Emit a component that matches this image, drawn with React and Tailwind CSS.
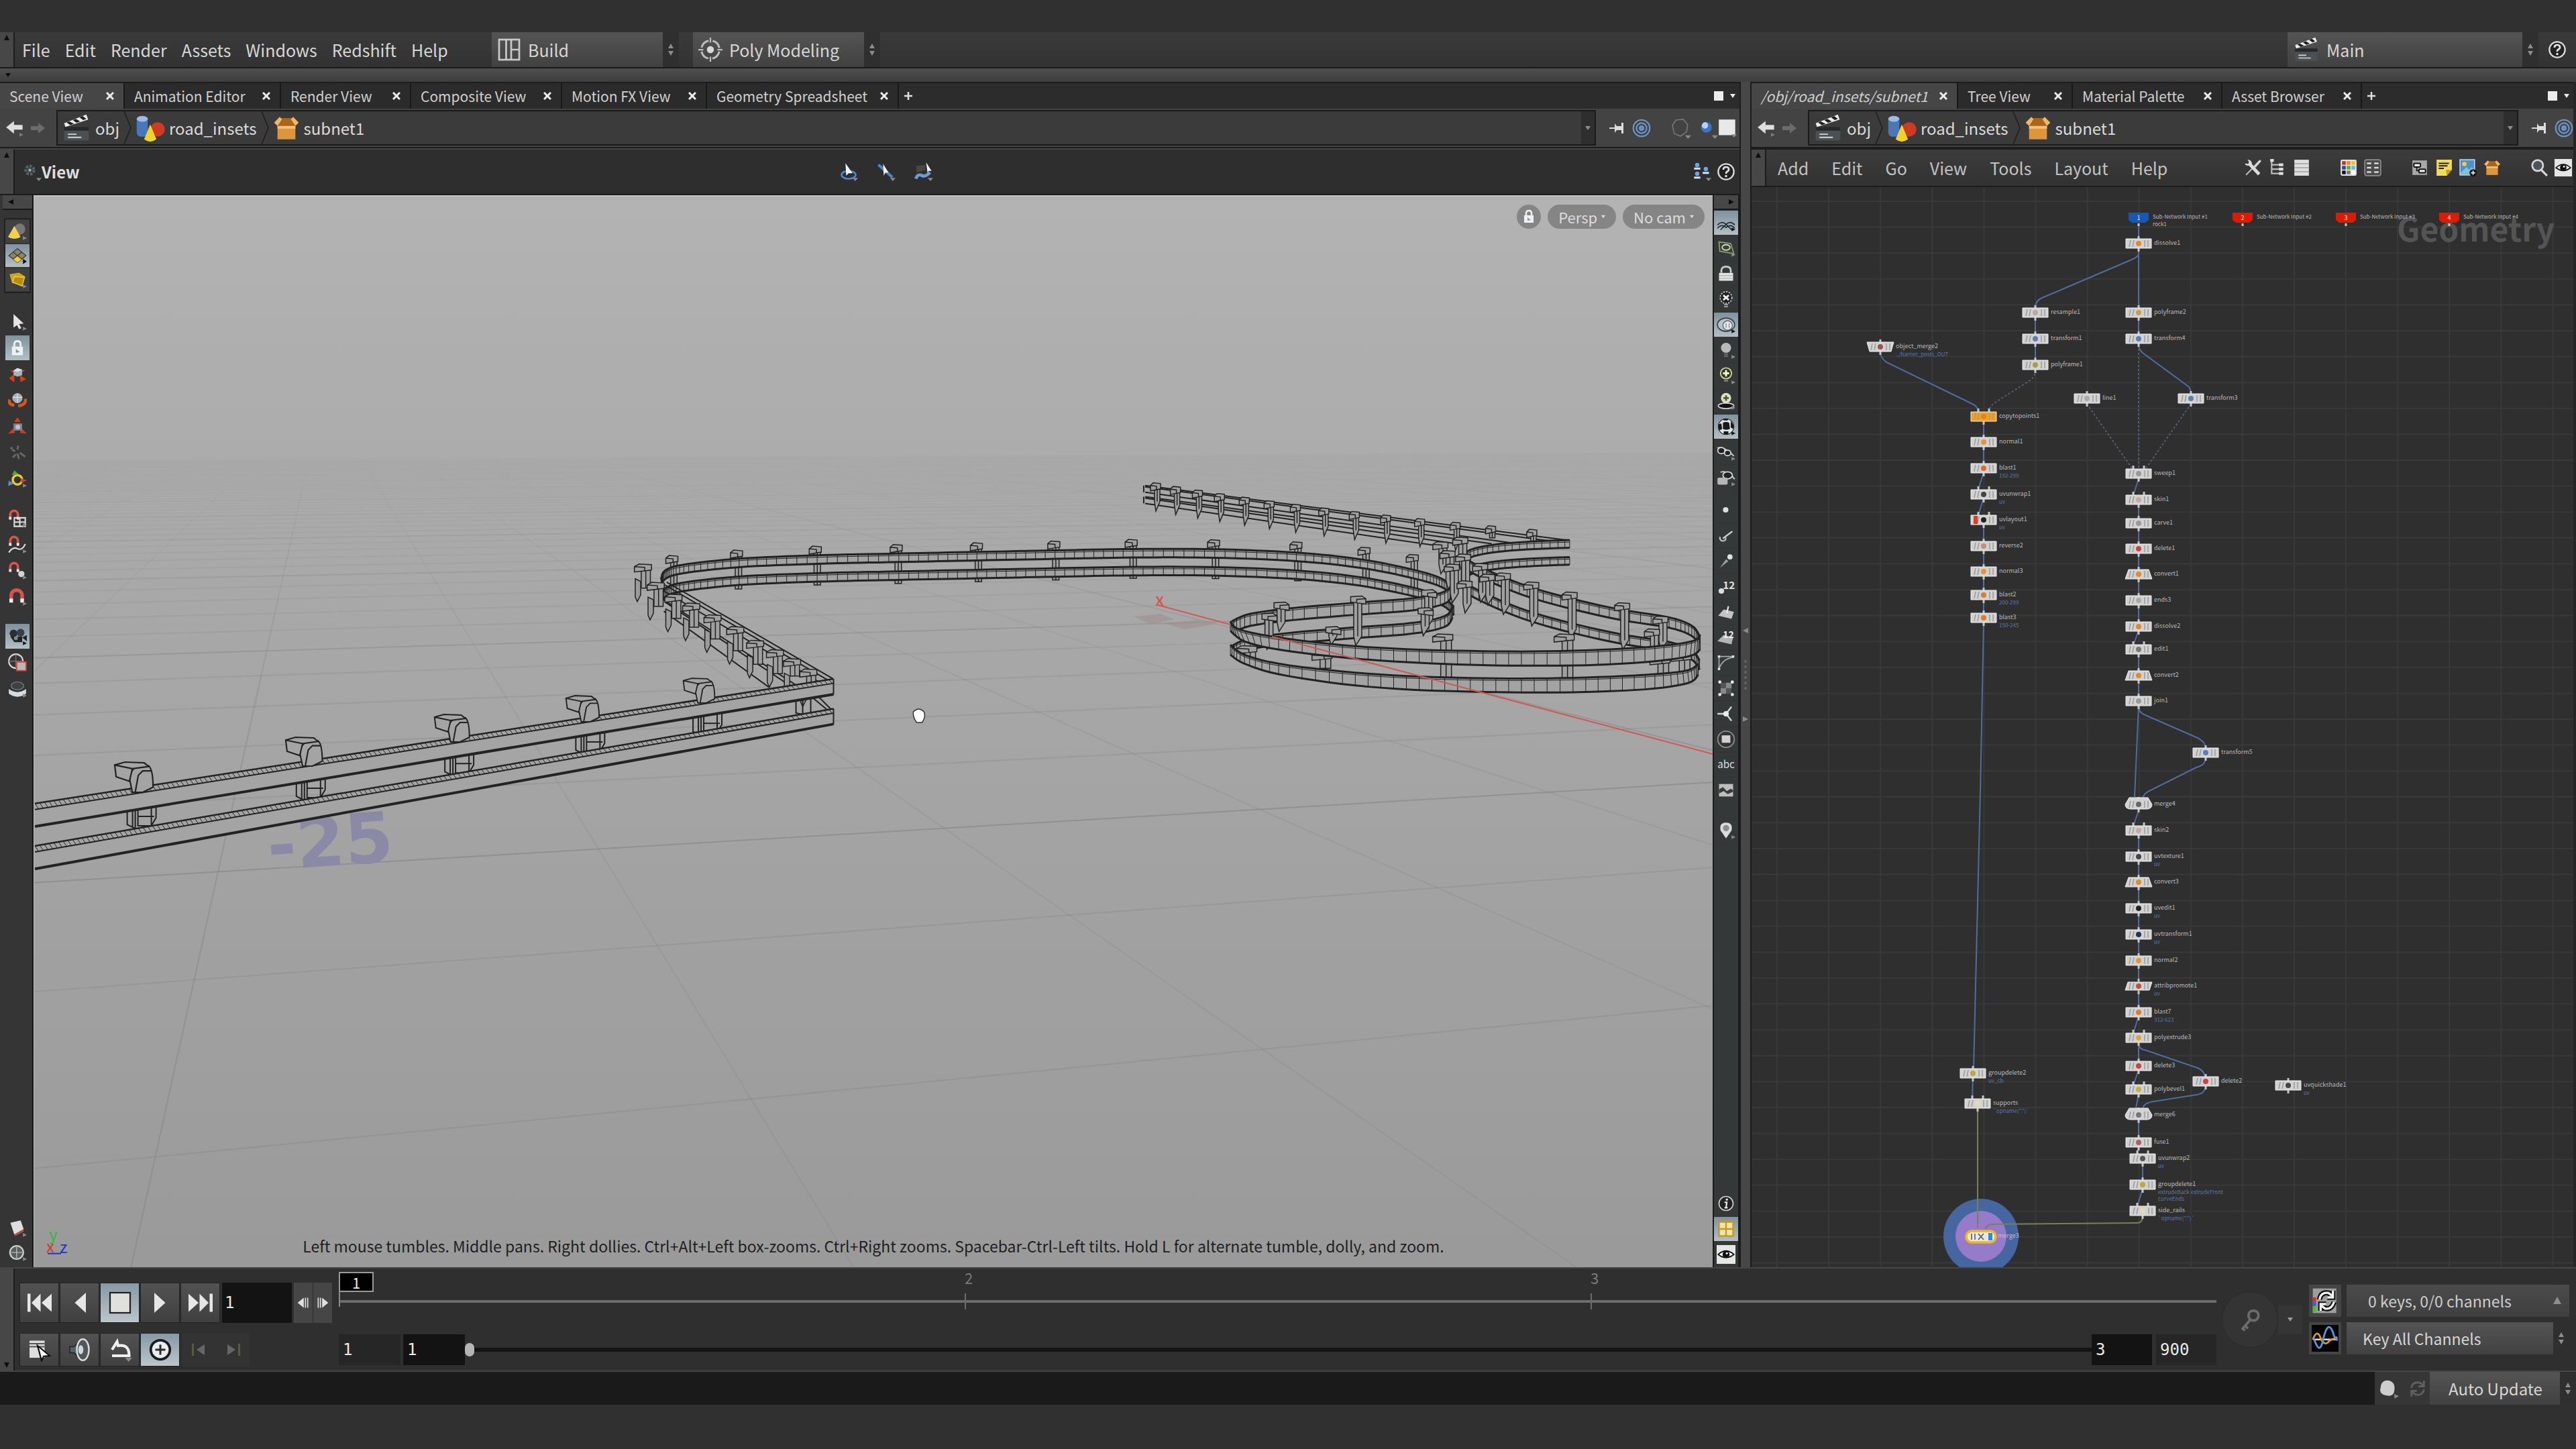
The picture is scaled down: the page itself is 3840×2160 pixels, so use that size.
const LEFT_TABS = [
  { label: 'Scene View', w: 'w-[186px]', active: true },
  { label: 'Animation Editor', w: 'w-[233px]' },
  { label: 'Render View', w: 'w-[194px]' },
  { label: 'Composite View', w: 'w-[225px]' },
  { label: 'Motion FX View', w: 'w-[216px]' },
  { label: 'Geometry Spreadsheet', w: 'w-[286px]' },
]

const RIGHT_TABS = [
  { label: '/obj/road_insets/subnet1', w: 'w-[308px]', active: true, italic: true },
  { label: 'Tree View', w: 'w-[171px]' },
  { label: 'Material Palette', w: 'w-[223px]' },
  { label: 'Asset Browser', w: 'w-[208px]' },
]

/* ---------- icons ---------- */

const flyout = <path d="M19 18 L24 20.5 L19 23 Z" fill="#8a8a8a" />
const drop = <path d="M17 20 H24 L20.5 24 Z" fill="#8a8a8a" />
const magnet = (
  <>
    <path d="M4 16 V10 A7 7 0 0 1 18 10 V16" fill="none" stroke="#d9534c" strokeWidth="4.5" />
    <path d="M1.7 14 H6.3 V19 H1.7 Z M15.7 14 H20.3 V19 H15.7 Z" fill="#f2f2f2" />
  </>
)
const eyeShape = (
  <>
    <path d="M2 12 Q12 3 22 12 Q12 20 2 12 Z" fill="#fff" stroke="#111" strokeWidth="1.5" />
    <circle cx="12" cy="12" r="4.5" fill="#111" />
    <circle cx="13" cy="10.5" r="1.3" fill="#fff" />
  </>
)
const boxShape = (
  <>
    <path d="M4 10 H20 V22 H4 Z" fill="#dd963b" />
    <path d="M4 10 L7 3 H17 L20 10 Z" fill="#a8651b" />
    <path d="M4 10 L1 7 L6 2 L8 4 Z M20 10 L23 7 L18 2 L16 4 Z" fill="#f0b765" />
    <path d="M4 10 H20 V12.5 H4 Z" fill="#f5c179" />
  </>
)

const ICONS = {
  layout: (
    <g fill="none" stroke="#c9c9c9" strokeWidth="1.8">
      <rect x="2" y="2" width="20" height="20" />
      <path d="M9 2 V22 M14 2 V22 M14 12 H22" />
    </g>
  ),
  target: (
    <g fill="none" stroke="#bdbdbd" strokeWidth="2">
      <circle cx="12" cy="12" r="9" strokeDasharray="10 4.14" strokeDashoffset="-2" />
      <path d="M12 0 V5 M12 19 V24 M0 12 H5 M19 12 H24" strokeWidth="1.5" />
      <circle cx="12" cy="12" r="3.5" fill="#d8d8d8" stroke="none" />
    </g>
  ),
  clapper: (
    <>
      <path d="M2 11 H22 V22 H2 Z" fill="#4b5052" />
      <path d="M2 11 H22 V14 H2 Z" fill="#26282a" />
      <path d="M2 8 L20 1 L21.5 5 L3 11 Z" fill="#ececec" />
      <path d="M6 6.5 L10 8.5 L7 9.6 L4 7.5 Z M11.5 4.5 L15 6.5 L12 7.7 L9 5.5 Z M17 2.2 L20 4.5 L17.5 5.5 L14.5 3.3 Z" fill="#1d1d1d" />
      <path d="M5 17 H12 M5 19.5 H16" stroke="#cfd5d8" strokeWidth="1" />
    </>
  ),
  geo: (
    <>
      <rect x="1" y="2" width="9" height="17" rx="3.5" fill="#4877ba" />
      <ellipse cx="5.5" cy="4.5" rx="4.5" ry="2.3" fill="#9dbbe6" />
      <circle cx="18" cy="13" r="5.8" fill="#cf3a24" />
      <path d="M12 9 L17 21 Q12 25 7 21 Z" fill="#f2d22c" />
    </>
  ),
  box: boxShape,
  back: (
    <>
      <path d="M1 11 L11 3 V8 H22 V14 H11 V19 Z" fill="#dedede" />
      <path d="M18 18 L23 20.5 L18 23 Z" fill="#7d7d7d" />
    </>
  ),
  forward: <path d="M23 12 L13 4 V9 H2 V15 H13 V20 Z" fill="#6b6b6b" />,
  pin: (
    <>
      <path d="M0 12 H9" stroke="#d9d9d9" strokeWidth="2" />
      <path d="M8 5 L11 9 H18 V4 H21 V20 H18 V15 H11 L8 19 Z" fill="#dcdcdc" />
    </>
  ),
  rings: (
    <g fill="none" stroke="#6f97cf" strokeWidth="1.8">
      <circle cx="12" cy="12" r="10.5" />
      <circle cx="12" cy="12" r="6.5" />
      <circle cx="12" cy="12" r="2.5" fill="#4c86d8" />
    </g>
  ),
  ghost: (
    <>
      <path d="M7 3 L15 2 L20 8 L19 16 L12 21 L5 18 L3 9 Z" fill="none" stroke="#777" strokeWidth="1.2" />
      {drop}
    </>
  ),
  ball: (
    <>
      <circle cx="11" cy="11" r="6" fill="#3c74c4" />
      <circle cx="9.5" cy="9" r="3.5" fill="#b9d2f5" />
      {drop}
    </>
  ),
  square: (
    <>
      <rect x="1" y="1" width="21" height="20" fill="#e8e8e8" />
      {drop}
    </>
  ),
  help: (
    <>
      <circle cx="12" cy="12" r="10" fill="#222" stroke="#d8d8d8" strokeWidth="2" />
      <path d="M8.5 9.5 Q8.5 6 12 6 Q15.5 6 15.5 9 Q15.5 11 12.8 12.2 Q12 12.7 12 14.5" fill="none" stroke="#e4e4e4" strokeWidth="2.3" />
      <circle cx="12" cy="17.5" r="1.5" fill="#e4e4e4" />
    </>
  ),
  gear: (
    <>
      <circle cx="9" cy="10" r="5" fill="none" stroke="#54636b" strokeWidth="4" strokeDasharray="3 1.5" />
      <circle cx="9" cy="10" r="2" fill="#9aa8b0" />
      {drop}
    </>
  ),
  tumble: (
    <>
      <ellipse cx="12" cy="16" rx="9" ry="5" fill="none" stroke="#4f82c9" strokeWidth="2.3" />
      <path d="M8 1 L17 14 L12 14 L9 17 Z" fill="#f4f4f4" />
      {drop}
    </>
  ),
  track: (
    <>
      <path d="M2 3 L20 19" stroke="#4f82c9" strokeWidth="3.5" />
      <path d="M8 2 L15 13 L11 13 L9 17 Z" fill="#f4f4f4" />
      {drop}
    </>
  ),
  dolly: (
    <>
      <path d="M2 5 L14 3 V10 L3 13 Z" fill="#4a4644" />
      <path d="M2 21 Q4 14 10 17 Q14 19 20 13" fill="none" stroke="#6d9be0" strokeWidth="4" />
      <path d="M15 0 L22 11 L18 11 L17 14 Z" fill="#f4f4f4" />
      {drop}
    </>
  ),
  stack: (
    <>
      <g fill="#6fa2e6">
        <circle cx="6" cy="3.5" r="2.8" />
        <circle cx="6" cy="14.5" r="2.8" />
        <circle cx="17" cy="8.5" r="2.8" />
      </g>
      <path d="M2 8 H10 M2 19.5 H10 M13 13.5 H21" stroke="#d5e2f2" strokeWidth="2.6" />
      {drop}
    </>
  ),
  cone: (
    <>
      <circle cx="15" cy="9" r="7" fill="#777" />
      <path d="M8 5 L16 19 Q8 24 0 19 Z" fill="#f1d04a" />
      {flyout}
    </>
  ),
  plane: (
    <>
      <path d="M12 3 L23 12 L12 21 L1 12 Z" fill="#8d8468" stroke="#3a382f" />
      <path d="M12 12 L17.5 16.5 L12 21 L6.5 16.5 Z" fill="#f3cd40" />
      <path d="M6.5 7.5 L17.5 16.5 M17.5 7.5 L6.5 16.5" stroke="#3a382f" />
      <path d="M19 16 L24 19.5 L19 23 Z" fill="#111" />
    </>
  ),
  solid: (
    <>
      <path d="M2 5 L14 3 L22 8 L18 20 L5 16 Z" fill="#d1a514" />
      <path d="M8 8 L21 9 L18 20 L6 15 Z" fill="#b98c0d" stroke="#f2d45a" />
      {flyout}
    </>
  ),
  cursor: (
    <>
      <path d="M7 2 L20 14 L14 14.5 L17 20 L14 21 L11.5 16 L7 19 Z" fill="#e6e6e6" />
      {flyout}
    </>
  ),
  lockBadge: (
    <>
      <path d="M5 10 H19 V21 H5 Z" fill="#eef2f4" />
      <path d="M8 10 V7 Q8 3 12 3 Q16 3 16 7 V10" fill="none" stroke="#eef2f4" strokeWidth="2.5" />
      <path d="M10 13 L15 17 L10 18 Z" fill="#8b979d" />
    </>
  ),
  move: (
    <>
      <path d="M1 17 L8 12 V22 Z M23 18 L15 13 L16 22 Z M2 7 H9 V11 Z M22 7 L16 6 V10 Z" fill="#d93f16" />
      <path d="M7 7 L12 4 L18 6 V13 L12 15 L7 13 Z" fill="#a9b0b6" />
      <path d="M7 7 L12 9 L18 6 L12 4 Z" fill="#dbe0e4" />
    </>
  ),
  rotate: (
    <>
      <path d="M2 11 Q0 17 8 18 M22 10 Q24 17 13 19" fill="none" stroke="#d9531a" strokeWidth="4" />
      <circle cx="12" cy="9" r="6.5" fill="#a6adb3" />
      <path d="M6 8 H18 M12 3 V15" stroke="#dfe4e8" />
    </>
  ),
  scale: (
    <>
      <path d="M12 0 L16 6 H8 Z M0 21 L7 14 L9 20 Z M24 21 L17 14 L15 20 Z" fill="#d63a1b" />
      <path d="M7 8 H18 V17 H7 Z" fill="#7d868f" />
      <circle cx="12.5" cy="12.5" r="3" fill="#b8c3cf" />
    </>
  ),
  pose: <path d="M5 8 L9 10 M13 3 L12 8 M10 14 L6 18 M15 12 L22 17 M12 13 L14 20 M3 6 h3" stroke="#686868" strokeWidth="2.5" />,
  handle: (
    <>
      <circle cx="12" cy="13" r="6" fill="none" stroke="#e8c93a" strokeWidth="3" />
      <path d="M8 1 L14 6 L5 7 Z" fill="#55a83a" />
      <path d="M16 11 L24 14 L17 17 Z" fill="#d83d35" />
      <path d="M1 14 L7 18 L0 21 Z" fill="#6587cf" />
      {flyout}
    </>
  ),
  magGrid: (
    <>
      <path d="M8 11 H22 V22 H8 Z M15 11 V22 M8 16.5 H22" fill="none" stroke="#dcdcdc" strokeWidth="1.8" />
      <g transform="scale(.7)">{magnet}</g>
      {flyout}
    </>
  ),
  magCurve: (
    <>
      <path d="M1 22 Q6 14 12 17 Q18 20 22 11" fill="none" stroke="#dcdcdc" strokeWidth="1.8" />
      <g transform="scale(.7)">{magnet}</g>
      {flyout}
    </>
  ),
  magPoint: (
    <>
      <circle cx="17" cy="16" r="4" fill="#d3d3d3" />
      <g transform="scale(.7)">{magnet}</g>
      {flyout}
    </>
  ),
  mag: (
    <>
      {magnet}
      {flyout}
    </>
  ),
  camera: (
    <>
      <circle cx="7" cy="8" r="5" fill="#2b2f33" />
      <circle cx="16" cy="7" r="5" fill="#3a3f44" />
      <path d="M3 12 H18 V19 H8 Z M18 13 L24 10 V18 Z" fill="#1f2326" />
      <circle cx="10" cy="14" r="2.5" fill="#7e8a92" />
      <path d="M19 18 L24 20.5 L19 23 Z" fill="#111" />
    </>
  ),
  lens: (
    <>
      <circle cx="10" cy="10" r="9" fill="none" stroke="#d8d8d8" strokeWidth="1.8" />
      <path d="M10 1 V19 M1 10 H19" stroke="#777" />
      <rect x="11" y="11" width="12" height="11" fill="#b7b7b7" stroke="#d4453c" strokeWidth="1.5" />
    </>
  ),
  dome: (
    <>
      <ellipse cx="12" cy="8" rx="8" ry="5" fill="#3d4144" stroke="#7d8386" />
      <path d="M1 12 Q12 20 23 12 V18 Q12 26 1 18 Z" fill="#d3dcdf" />
      {flyout}
    </>
  ),
  brush: (
    <>
      <path d="M3 5 L16 2 L20 13 L8 20 Z" fill="#dedede" />
      <path d="M8 20 L20 13 L20 16 L9 22 Z" fill="#b4503f" />
      {flyout}
    </>
  ),
  disc: (
    <>
      <circle cx="11" cy="12" r="8.5" fill="#5a5f5c" stroke="#c7cdc9" strokeWidth="2" />
      <path d="M4 12 H18 M11 5 V19" stroke="#c7cdc9" />
      {flyout}
    </>
  ),
  waves: (
    <>
      <path d="M1 15 Q6 9 12 14 Q18 9 23 15 M1 19 Q6 13 12 18 Q18 13 23 19 M5 21 L12 14 L19 21" fill="none" stroke="#22282c" strokeWidth="1.4" />
      <path d="M19 18 L24 20.5 L19 23 Z" fill="#111" />
    </>
  ),
  wirePlane: (
    <>
      <path d="M3 4 L18 6 L22 19 L4 16 Z" fill="#3a4038" stroke="#8ea46c" strokeWidth="1.4" />
      <ellipse cx="12" cy="11" rx="5" ry="3.5" fill="none" stroke="#cfd8c0" strokeWidth="1.6" />
      {flyout}
    </>
  ),
  padlock: (
    <>
      <path d="M3 11 H21 V21 H3 Z" fill="#e3e3e3" />
      <path d="M6 11 V8 Q6 3 12 3 Q18 3 18 8 V11" fill="none" stroke="#c9c9c9" strokeWidth="2.4" />
      <path d="M3 14.5 H21 M3 18 H21" stroke="#aaa" />
    </>
  ),
  bulbOff: (
    <>
      <circle cx="12" cy="10" r="7.5" fill="#222" stroke="#c9c9c9" strokeWidth="1.5" strokeDasharray="2 1.5" />
      <path d="M8.5 7 L15.5 13 M15.5 7 L8.5 13" stroke="#eee" strokeWidth="2.4" />
      <path d="M9.5 19 H14.5 M9.5 21.5 H14.5" stroke="#aaa" strokeWidth="1.5" />
    </>
  ),
  shade: (
    <>
      <ellipse cx="12" cy="12" rx="11" ry="8.5" fill="#b9c4ca" stroke="#3a4247" strokeWidth="1.5" />
      <circle cx="14" cy="13" r="6" fill="#e3e7e9" stroke="#4c5459" />
      <path d="M12 10 V16 M16 10 V16" stroke="#7e878c" />
      <path d="M19 18 L24 20.5 L19 23 Z" fill="#111" />
    </>
  ),
  bulb: (
    <>
      <circle cx="12" cy="9" r="6.5" fill="#b9b9b9" />
      <path d="M9.5 17 H14.5 M9.5 19.5 H14.5" stroke="#777" strokeWidth="1.5" />
      {flyout}
    </>
  ),
  bulbPlus: (
    <>
      <circle cx="12" cy="9" r="7" fill="#33351f" stroke="#cfd39a" strokeWidth="1.6" />
      <path d="M12 5 V13 M8 9 H16" stroke="#eef0c8" strokeWidth="2.6" />
      <path d="M9.5 18.5 H14.5" stroke="#888" strokeWidth="2" />
      {flyout}
    </>
  ),
  bulbGround: (
    <>
      <ellipse cx="12" cy="18" rx="10" ry="3.5" fill="#111" stroke="#cfcfcf" strokeWidth="1.4" />
      <circle cx="12" cy="8" r="6.5" fill="#dfe2c2" />
      <path d="M12 4.5 V11.5 M8.5 8 H15.5" stroke="#55592f" strokeWidth="2.3" />
      {flyout}
    </>
  ),
  checker: (
    <>
      <circle cx="12" cy="12" r="10" fill="#dfe3e5" stroke="#333" />
      <path d="M8 7 Q12 5 16 7 L17 15 Q12 17 8 15 Z M2 9 L6 8 L7 15 L3 17 Z M18 5 L22 10 L21 15 L18 13 Z M9 18 H15 V22 H9 Z M8 2 L15 2 L14 4 H9 Z" fill="#17191b" />
      <path d="M19 18 L24 20.5 L19 23 Z" fill="#111" />
    </>
  ),
  glasses: (
    <>
      <path d="M1 7 Q8 3 22 17" fill="none" stroke="#d0d0d0" strokeWidth="1.6" />
      <ellipse cx="6" cy="10" rx="4.5" ry="4" fill="#222" stroke="#d9d9d9" strokeWidth="1.5" />
      <ellipse cx="14" cy="13" rx="4" ry="3.5" fill="#222" stroke="#d9d9d9" strokeWidth="1.5" />
      {flyout}
    </>
  ),
  camGlasses: (
    <>
      <path d="M5 5 Q14 2 23 14" fill="none" stroke="#d0d0d0" strokeWidth="1.6" />
      <ellipse cx="14" cy="9" rx="6" ry="4.5" fill="#222" stroke="#d9d9d9" strokeWidth="1.5" />
      <rect x="1" y="12" width="13" height="9" rx="2" fill="#b5b5b5" />
      {flyout}
    </>
  ),
  dot: <circle cx="11.5" cy="12" r="3.5" fill="#dedede" />,
  normal: (
    <>
      <path d="M8 16 L20 7" stroke="#d5d5d5" strokeWidth="2" />
      <path d="M4 14 Q4 20 9 19 Q13 18 11 14" fill="none" stroke="#bdbdbd" strokeWidth="2" />
    </>
  ),
  pointVec: (
    <>
      <circle cx="17" cy="7" r="3.3" fill="#e3e3e3" />
      <path d="M4 21 L12 10 L15 12.5 Z" fill="#9e9e9e" />
    </>
  ),
  num: (
    <>
      <circle cx="6" cy="18" r="3.5" fill="#dedede" />
      <text x="8" y="15" className="fill-[#e2e2e2] text-[13px] font-bold">12</text>
    </>
  ),
  prim: (
    <>
      <path d="M2 17 L9 9 L22 12 L19 21 Z" fill="#c4c4c4" />
      <path d="M13 14 L15 5" stroke="#efefef" strokeWidth="1.8" />
    </>
  ),
  primNum: (
    <>
      <path d="M1 17 L9 9 L21 12 L19 21 Z" fill="#b4b4b4" />
      <text x="8" y="13" className="fill-[#f0f0f0] text-[12px] font-bold">12</text>
    </>
  ),
  profile: (
    <>
      <path d="M3 4 H22 M3 4 V20 M3 20 Q7 7 21 5" fill="none" stroke="#a9a9a9" strokeWidth="1.4" />
      <path d="M1.5 2.5 h3 v3 h-3 Z M19.5 2.5 h3 v3 h-3 Z M1.5 18.5 h3 v3 h-3 Z" fill="#ddd" />
    </>
  ),
  hull: (
    <>
      <path d="M5 12 H12 V19 H5 Z M12 5 H19 V12 H12 Z" fill="#888" />
      <path d="M5 5 H12 V12 H5 Z M12 12 H19 V19 H12 Z" fill="#555" />
      <g fill="#eee">
        <circle cx="4" cy="4" r="2" />
        <circle cx="20" cy="4" r="2" />
        <circle cx="4" cy="20" r="2" />
        <circle cx="20" cy="20" r="2" />
      </g>
    </>
  ),
  axes: (
    <>
      <path d="M1 12 H12 L19 3 M12 12 L19 21" fill="none" stroke="#d5d5d5" strokeWidth="2" />
      <circle cx="12" cy="12" r="3.5" fill="#ececec" />
    </>
  ),
  primBox: (
    <>
      <circle cx="12" cy="12" r="10.5" fill="#333" stroke="#8f8f8f" strokeWidth="1.5" />
      <rect x="6.5" y="7" width="11" height="9.5" fill="#d0d0d0" />
    </>
  ),
  abc: <text x="12" y="16" textAnchor="middle" className="fill-[#dadada] text-[13px]">abc</text>,
  image: (
    <>
      <path d="M3 4 H21 V20 H3 Z" fill="#bdbdbd" />
      <path d="M3 11 L8 8 L13 13 L18 10 L21 12 V14 L14 17 L9 13 L3 16 Z" fill="#3a3a3a" />
    </>
  ),
  marker: (
    <>
      <path d="M12 22 L5 12 Q3 2 12 2 Q21 2 19 12 Z" fill="#dcdcdc" />
      <circle cx="12" cy="9" r="4" fill="#8d8d8d" />
      {flyout}
    </>
  ),
  info: (
    <>
      <circle cx="12" cy="12" r="9" fill="#222" stroke="#cfcfcf" strokeWidth="1.4" />
      <path d="M10 10.500 H13 L12 17.5 M10 17.5 H14" fill="none" stroke="#eee" strokeWidth="1.8" />
      <circle cx="13" cy="7" r="1.4" fill="#eee" />
    </>
  ),
  quad: (
    <>
      <rect x="2" y="2" width="20" height="20" fill="#c99a17" />
      <path d="M4 4 H11 V11 H4 Z M13 4 H20 V11 H13 Z M4 13 H11 V20 H4 Z M13 13 H20 V20 H13 Z" fill="#efe2b4" />
    </>
  ),
  eye: (
    <>
      <rect x="0" y="0" width="24" height="24" fill="#e6e6e6" />
      {eyeShape}
    </>
  ),
  tools: (
    <>
      <path d="M2 22 L20 3" stroke="#b5b5b5" strokeWidth="2" />
      <path d="M21 1 L23 3 L15 12 L13 10 Z" fill="#d6d6d6" />
      <path d="M7 7 L20 21" stroke="#dcdcdc" strokeWidth="4.5" />
      <path d="M4 1 Q10 1 10 7 Q7 11 1 8 L1 6 L5 7 L6 4 Z" fill="#dcdcdc" />
    </>
  ),
  tree: (
    <>
      <path d="M4 2 V21 M4 8 H18 M4 14 H18 M4 20 H18" fill="none" stroke="#bdbdbd" strokeWidth="2" />
      <path d="M2 0 h5 v4 h-5 Z M14 6 h6 v4 h-6 Z M14 12 h6 v4 h-6 Z M14 18 h6 v4 h-6 Z" fill="#dcdcdc" />
    </>
  ),
  list: (
    <>
      <rect x="2" y="1" width="20" height="22" fill="#dedede" />
      <path d="M2 6.5 H22 M2 12 H22 M2 17.5 H22" stroke="#a0a0a0" strokeWidth="1.5" />
    </>
  ),
  palette: (
    <>
      <rect x="1" y="1" width="22" height="22" rx="2" fill="#e2e2e2" />
      <path d="M3 3 h5 v5 h-5 Z" fill="#d02c1c" />
      <path d="M9.5 3 h5 v5 h-5 Z" fill="#ef8a1d" />
      <path d="M16 3 h5 v5 h-5 Z" fill="#e8c81f" />
      <path d="M3 9.5 h5 v5 h-5 Z" fill="#23499b" />
      <path d="M9.5 9.5 h5 v5 h-5 Z" fill="#5fae2c" />
      <path d="M16 9.5 h5 v5 h-5 Z" fill="#6fb6e8" />
      <path d="M3 16 h5 v5 h-5 Z" fill="#111" />
      <path d="M9.5 16 h5 v5 h-5 Z" fill="#777" />
      <path d="M16 16 h5 v5 h-5 Z" fill="#fff" />
    </>
  ),
  gridList: (
    <>
      <rect x="1" y="1" width="22" height="22" rx="3" fill="#4b4b4b" stroke="#8d8d8d" strokeWidth="1.5" />
      <path d="M4 6 H10 M14 6 H20 M4 12 H10 M14 12 H20 M4 18 H10 M14 18 H20" stroke="#dadada" strokeWidth="2.4" />
    </>
  ),
  boxes: (
    <>
      <rect x="2" y="2" width="20" height="20" fill="#a9a9a9" />
      <rect x="4" y="6" width="9" height="5" rx="1" fill="#eee" stroke="#111" strokeWidth="1.8" />
      <rect x="11" y="14" width="9" height="5" rx="1" fill="#eee" stroke="#111" strokeWidth="1.8" />
      <path d="M8 11 V16 H11" fill="none" stroke="#111" strokeWidth="1.5" />
    </>
  ),
  note: (
    <>
      <path d="M2 1 H23 V15 L16 23 H2 Z" fill="#f0db5d" />
      <path d="M16 23 L15 15 L23 15 Z" fill="#bd9f1f" />
      <path d="M5 6 H19 M5 9.5 H17 M5 13 H12" stroke="#222" strokeWidth="1.8" />
    </>
  ),
  picture: (
    <>
      <rect x="1" y="1" width="20" height="21" fill="#4c8fd6" stroke="#bcd4ec" strokeWidth="1.5" />
      <circle cx="7" cy="7" r="3" fill="#f3d12c" />
      <path d="M2 19 L10 11 L14 15 L17 11 L20 14 V21 H2 Z" fill="#7fc4d4" />
      <circle cx="19" cy="19" r="5" fill="#111" />
      <path d="M16 19 H22 M19 16 V22" stroke="#eee" strokeWidth="1.5" />
    </>
  ),
  search: (
    <>
      <path d="M15 15 L23 23" stroke="#d4d4d4" strokeWidth="3" />
      <circle cx="10" cy="9" r="7.5" fill="#4d555c" stroke="#d4d4d4" strokeWidth="2.5" />
    </>
  ),
  first: <path d="M0 3 H3 V21 H0 Z M13 3 V21 L4 12 Z M24 3 V21 L14 12 Z" fill="#e6e6e6" />,
  playBack: <path d="M18 2 V22 L7 12 Z" fill="#e6e6e6" />,
  stop: <rect x="2" y="2" width="20" height="20" fill="#dfdfdb" stroke="#222" strokeWidth="1.5" />,
  play: <path d="M6 2 V22 L17 12 Z" fill="#e6e6e6" />,
  last: <path d="M21 3 H24 V21 H21 Z M0 3 V21 L10 12 Z M11 3 V21 L20 12 Z" fill="#e6e6e6" />,
  stepBack: <path d="M13 3 V21 L2 12 Z M15 3 H17 V21 H15 Z M19 3 H21 V21 H19 Z" fill="#e0e0e0" />,
  stepNext: <path d="M11 3 V21 L22 12 Z M7 3 H9 V21 H7 Z M3 3 H5 V21 H3 Z" fill="#e0e0e0" />,
  flipbook: (
    <>
      <rect x="2" y="3" width="15" height="17" fill="#dedede" />
      <path d="M2 6 H17 M2 9 H17" stroke="#555" strokeWidth="1.3" />
      <path d="M10 8 L22 18 L16 18.5 L14 23 Z" fill="#fff" stroke="#111" strokeWidth="1.5" />
    </>
  ),
  audio: (
    <>
      <path d="M2 9 H6 L13 3 V21 L6 15 H2 Z" fill="#55636a" stroke="#222" />
      <ellipse cx="15" cy="12" rx="6" ry="10.5" fill="#4d585d" stroke="#dcdcdc" strokeWidth="1.6" />
      <ellipse cx="13" cy="12" rx="2.5" ry="4.5" fill="#cfd9dd" />
    </>
  ),
  loop: (
    <>
      <path d="M4 12 L9 4 L10 8 Q21 6 21 18 H4" fill="none" stroke="#eee" strokeWidth="2.8" />
      {drop}
    </>
  ),
  clock: (
    <>
      <circle cx="12" cy="12" r="9.5" fill="#e9edef" stroke="#1c1c1c" strokeWidth="2.5" />
      <path d="M12 7 V17 M7 12 H17" stroke="#2a2a2a" strokeWidth="2" />
    </>
  ),
  keyGlyph: (
    <g fill="none" stroke="#6c6c6c" strokeWidth="2.5">
      <circle cx="15.5" cy="8" r="5" />
      <path d="M12.5 12 L4 22 M7 18 L10 21 M4.5 20.5 L7 23" />
    </g>
  ),
  refresh: (
    <>
      <rect x="1" y="1" width="21" height="22" fill="#9d9d9d" />
      <path d="M1 9 h3 v4 h-3 Z" fill="#c33" />
      <path d="M1 13 h3 v4 h-3 Z" fill="#36c" />
      <path d="M1 17 h3 v5 h-3 Z" fill="#5b3" />
      <path d="M7 11 Q8 4 15 5 L19 8 M19 3 V9 H14 M20 13 Q18 20 12 19 L8 16 M8 21 V15 H13" fill="none" stroke="#111" strokeWidth="4.5" />
      <path d="M7 11 Q8 4 15 5 L19 8 M19 3 V9 H14 M20 13 Q18 20 12 19 L8 16 M8 21 V15 H13" fill="none" stroke="#f1f1f1" strokeWidth="2" />
    </>
  ),
  curves: (
    <>
      <rect x="0" y="0" width="24" height="24" fill="#050505" />
      <path d="M1 13 H23" stroke="#ddd" strokeWidth="1.5" />
      <path d="M1 13 Q5 3 8 12 Q12 20 16 14 L23 11" fill="none" stroke="#e2942d" strokeWidth="1.7" />
      <path d="M2 12 Q7 28 10 14 Q15 -8 20 10 L23 14" fill="none" stroke="#5f93dd" strokeWidth="1.7" />
    </>
  ),
  brain: (
    <>
      <path d="M4 8 Q6 2 13 3 Q20 5 19 13 Q19 19 14 20 Q4 20 3 14 Z" fill="#cdcdcd" />
      {flyout}
    </>
  ),
  sync: <path d="M4 11 Q5 4 12 4 Q16 4 19 8 M20 2 V9 H13 M20 13 Q19 20 12 20 Q8 20 5 16 M4 22 V15 H11" fill="none" stroke="#5f5f5f" strokeWidth="2.5" />,
}

function Icon({ name, className = 'size-7' }) {
  return (
    <svg viewBox="0 0 24 24" className={`${className} shrink-0`} aria-hidden="true">
      {ICONS[name]}
    </svg>
  )
}

/* ---------- shared chrome ---------- */

function Handle({ up = true }) {
  return (
    <div className={`w-[22px] shrink-0 border-r-2 border-[#1c1c1c] bg-[#474747] flex justify-center py-1 ${up ? 'items-start' : 'items-end'}`}>
      <svg viewBox="0 0 8 8" className="size-2">
        <path d={up ? 'M4 0 L8 8 H0 Z' : 'M0 0 H8 L4 8 Z'} fill="#0d0d0d" />
      </svg>
    </div>
  )
}

function Caret({ className = 'size-2', fill = '#8d8d8d' }) {
  return <svg viewBox="0 0 8 8" className={className}><path d="M0 1 H8 L4 7 Z" fill={fill} /></svg>
}

function Combo({ icon, iconClass, label, options, className, textClass = 'text-[25px]' }) {
  return (
    <div className={`flex shrink-0 items-stretch ${className}`}>
      <label className="flex flex-1 min-w-0 items-center gap-2.5 px-2 bg-linear-to-b from-[#545454] to-[#414141]">
        {icon && <Icon name={icon} className={iconClass} />}
        <select aria-label={label} className={`flex-1 min-w-0 appearance-none bg-transparent outline-none leading-9 text-[#d6d6d6] ${textClass}`}>
          {options.map(o => <option key={o}>{o}</option>)}
        </select>
      </label>
      <span className="w-6 flex items-center justify-center bg-[#2f2f2f]">
        <svg viewBox="0 0 10 20" className="w-2.5 h-5">
          <path d="M5 1 L9 8 H1 Z M5 19 L9 12 H1 Z" fill="#8d8d8d" />
        </svg>
      </span>
    </div>
  )
}

function Tabs({ tabs }) {
  return (
    <div className="h-10 flex items-stretch border-t-2 border-[#1c1c1c] bg-[#2c2c2c]">
      {tabs.map(t => (
        <div
          key={t.label}
          className={`flex shrink-0 items-center justify-between pl-3.5 pr-3.5 border-r-2 border-[#191919] ${t.w} ${t.active ? 'bg-[#464646]' : 'bg-[#2b2b2b]'}`}
        >
          <button className={`text-[21px] leading-7 whitespace-nowrap text-[#cfcfcf] ${t.italic ? 'italic' : ''}`}>{t.label}</button>
          <button aria-label={`Close ${t.label}`}>
            <svg viewBox="0 0 12 12" className="size-3">
              <path d="M1 1 L11 11 M11 1 L1 11" stroke="#ececec" strokeWidth="3" />
            </svg>
          </button>
        </div>
      ))}
      <button aria-label="Add tab" className="w-7 flex items-center justify-center">
        <svg viewBox="0 0 12 12" className="size-3"><path d="M6 0 V12 M0 6 H12" stroke="#e0e0e0" strokeWidth="2.5" /></svg>
      </button>
      <div className="ml-auto flex items-center gap-2.5 pr-1.5">
        <span className="size-3.5 bg-[#ececec]" />
        <Caret fill="#ececec" />
      </div>
    </div>
  )
}

function Crumb({ icon, iconClass, children, last }) {
  return (
    <>
      <a href="#" className="flex items-center gap-1.5 text-[24px] leading-9 text-[#dadada]">
        <Icon name={icon} className={iconClass} />
        {children}
      </a>
      {!last && (
        <svg viewBox="0 0 12 50" className="w-3 h-full mx-1.5" preserveAspectRatio="none">
          <path d="M1 0 L11 25 L1 50" fill="none" stroke="#1e1e1e" strokeWidth="1.5" />
        </svg>
      )}
    </>
  )
}

function PathBar({ children }) {
  return (
    <div className="h-[59px] flex items-center gap-2 pl-2 pr-1 bg-[#434343] border-b-2 border-[#1c1c1c]">
      <button aria-label="Back"><Icon name="back" className="size-7" /></button>
      <button aria-label="Forward" className="mr-2"><Icon name="forward" className="size-6" /></button>
      <nav className="flex flex-1 self-stretch my-0.5 items-center pl-1.5 border-2 border-[#1a1a1a] bg-[#3b3b3b]">
        <Crumb icon="clapper" iconClass="size-11">obj</Crumb>
        <Crumb icon="geo" iconClass="size-11">road_insets</Crumb>
        <Crumb icon="box" iconClass="size-10" last>subnet1</Crumb>
        <button aria-label="Path history" className="ml-auto self-stretch w-5 flex items-center justify-center bg-[#2e2e2e]">
          <Caret />
        </button>
      </nav>
      {children}
    </div>
  )
}

/* ---------- tool strips ---------- */

const LEFT_TOOLS = [
  { top: 'mt-[55px]', items: ['cursor', '*lockBadge', 'move', 'rotate', 'scale', 'pose', 'handle'] },
  { top: 'mt-5', items: ['magGrid', 'magCurve', 'magPoint', 'mag'] },
  { top: 'mt-5', items: ['*camera', 'lens', 'dome'] },
]

const DISPLAY_TOOLS = [
  { top: 'mt-0', items: ['*waves', 'wirePlane', 'padlock', 'bulbOff', '*shade', 'bulb', 'bulbPlus', 'bulbGround', '*checker', 'glasses', 'camGlasses'] },
  { top: 'mt-2.5', items: ['dot', 'normal', 'pointVec', 'num', 'prim', 'primNum', 'profile', 'hull', 'axes', 'primBox', 'abc', 'image'] },
  { top: 'mt-[22px]', items: ['marker'] },
]

function ToolButton({ item, className }) {
  const active = item.startsWith('*')
  const name = active ? item.slice(1) : item
  return (
    <button aria-label={name} className={`flex items-center justify-center w-9 border-y border-[#353535] ${className} ${active ? 'bg-linear-to-b from-[#7f929e] to-[#b4bfc4]' : ''}`}>
      <Icon name={name} className="size-7" />
    </button>
  )
}

function LeftStrip() {
  return (
    <div className="w-[50px] shrink-0 flex flex-col items-center pl-1 bg-[#353535] border-r-2 border-[#161616]">
      <div className="h-[22px] w-full flex items-center pl-2 bg-[#474747] border-b-2 border-[#1a1a1a]">
        <svg viewBox="0 0 8 8" className="size-2"><path d="M8 0 V8 L0 4 Z" fill="#0d0d0d" /></svg>
      </div>
      <div className="mt-3 -mb-8 flex flex-col border-2 border-[#222] bg-[#414141]">
        {['cone', '*plane', 'solid'].map(i => <ToolButton key={i} item={i} className="h-9" />)}
      </div>
      {LEFT_TOOLS.map(g => (
        <div key={g.items[0]} className={g.top}>
          {g.items.map(i => <ToolButton key={i} item={i} className="h-[39px]" />)}
        </div>
      ))}
      <div className="mt-auto mb-1">
        {['brush', 'disc'].map(i => <ToolButton key={i} item={i} className="h-9" />)}
      </div>
    </div>
  )
}

function DisplayStrip() {
  return (
    <div className="w-10 shrink-0 flex flex-col items-center bg-[#353838] border-x-2 border-[#1c1c1c]">
      <div className="h-[22px] w-full flex items-center justify-end pr-1.5 bg-[#474747] border-b-2 border-[#1a1a1a]">
        <svg viewBox="0 0 8 8" className="size-2"><path d="M0 0 V8 L8 4 Z" fill="#0d0d0d" /></svg>
      </div>
      {DISPLAY_TOOLS.map(g => (
        <div key={g.items[0]} className={g.top}>
          {g.items.map(i => <ToolButton key={i} item={i} className="h-[38px]" />)}
        </div>
      ))}
      <div className="mt-auto">
        {['info', '*quad', 'eye'].map(i => <ToolButton key={i} item={i} className="h-[38px]" />)}
      </div>
    </div>
  )
}

/* ---------- 3D scene ---------- */

// the scene's drawing units: two sketch spaces mapped onto the view
const far = ([u, v]) => [900 + u * 1.0587, 680 + v / 3]
const near = ([u, v]) => [40 + u * 0.7908, 960 + v * 0.4082]

const line = pts => 'M' + pts.map(([x, y]) => `${x.toFixed(1)} ${y.toFixed(1)}`).join(' L')

function smooth(pts, steps) {
  const out = []
  for (let i = 0; i < pts.length - 1; i++) {
    const p0 = pts[i - 1] || pts[i]
    const p1 = pts[i]
    const p2 = pts[i + 1]
    const p3 = pts[i + 2] || p2
    for (let s = 0; s < steps; s++) {
      const t = s / steps
      out.push([0, 1].map(k =>
        0.5 * (2 * p1[k] + (p2[k] - p0[k]) * t + (2 * p0[k] - 5 * p1[k] + 4 * p2[k] - p3[k]) * t * t + (3 * p1[k] - p0[k] - 3 * p2[k] + p3[k]) * t * t * t)
      ))
    }
  }
  out.push(pts[pts.length - 1])
  return out
}

// a curved rail: top edge, bottom edge, and the rungs of its wire mesh
function Rail({ top, bottom, steps = 7, lip = 3 }) {
  const a = smooth(top.map(far), steps)
  const b = smooth(bottom.map(far), steps)
  const inner = a.map(([x, y]) => [x, y + lip])
  const rungs = a.map((p, i) => line([p, b[i]])).join(' ')
  return (
    <g fill="none" stroke="#222" strokeLinejoin="round">
      <path d={line([...a, ...b.slice().reverse()]) + 'Z'} fill="#a3a3a3" stroke="none" />
      <path d={rungs} strokeWidth="1" />
      <path d={line(a)} strokeWidth="3" />
      <path d={line(inner)} strokeWidth="1" />
      <path d={line(b)} strokeWidth="3" />
    </g>
  )
}

// upright with a bracket head; spike adds the buried foot
function Post({ x, y, h, w = 12, flip = false, spike = false }) {
  const s = flip ? -1 : 1
  const foot = spike ? `L${x - w * 0.1} ${y + h + 14} L${x + w * 0.5} ${y + h}` : `L${x + w * 0.5} ${y + h}`
  return (
    <g fill="#a0a0a0" stroke="#222" strokeWidth="1.5">
      <path d={`M${x - w * 0.3} ${y + 3} V${y + h} ${foot} V${y + 3} Z M${x + w * 0.1} ${y + 8} V${y + h}`} />
      <path d={`M${x - s * w * 0.9} ${y + 2} L${x - s * w * 0.5} ${y - 2} L${x + s * w * 0.6} ${y - 1} V${y + 7} L${x - s * w * 0.9} ${y + 10} Z M${x - s * w * 0.9} ${y + 2} L${x} ${y + 3} V${y + 8}`} />
    </g>
  )
}

const shift = (pts, dv) => pts.map(([u, v]) => [u, v + dv])

const ARC = [[80, 548], [86, 508], [112, 482], [190, 455], [300, 440], [415, 432], [525, 425], [635, 418], [745, 412], [860, 413], [975, 428], [1065, 458], [1140, 505], [1180, 545], [1197, 590]]
const ARC_POSTS = [[97, 447], [188, 423], [299, 405], [413, 398], [526, 390], [635, 382], [744, 375], [860, 376], [976, 386], [1072, 410], [1140, 442]]
const LOOP_TOP = [[882, 735], [895, 772], [950, 808], [1040, 842], [1130, 860], [1220, 868], [1310, 870], [1400, 863], [1480, 848], [1532, 825], [1544, 795]]
const LOOP_BOTTOM = [[882, 778], [902, 825], [950, 862], [1040, 897], [1130, 918], [1220, 930], [1310, 934], [1400, 930], [1480, 914], [1530, 890], [1544, 860]]
const LOOP2_TOP = [[882, 840], [902, 885], [950, 925], [1040, 960], [1130, 980], [1220, 989], [1310, 991], [1400, 985], [1480, 972], [1526, 955], [1541, 925]]
const LOOP2_BOTTOM = [[882, 885], [902, 925], [950, 972], [1040, 1016], [1130, 1040], [1220, 1050], [1310, 1054], [1400, 1050], [1480, 1036], [1528, 1010], [1541, 975]]
const BACK_LEFT = [[884, 735], [910, 702], [970, 676], [1060, 652], [1140, 632], [1184, 602], [1195, 560]]
const BACK_RIGHT = [[1212, 455], [1250, 515], [1300, 578], [1360, 632], [1430, 682], [1500, 718], [1532, 755], [1543, 800]]
const STUB = [[1360, 372], [1310, 378], [1260, 390], [1225, 410], [1207, 440]]

const STRAIGHT = [
  [[762, 128], [1355, 372]], [[762, 134], [1330, 375]], [[762, 158], [1280, 385]],
  [[762, 178], [1250, 388]], [[762, 184], [1215, 395]], [[762, 208], [1180, 400]],
]
const STRAIGHT_POSTS = [778, 806, 837, 868, 903, 938, 975, 1015, 1058, 1102, 1150, 1200, 1250, 1308]

const CLUSTER = [
  [1180, 385, 40], [1208, 365, 40], [1190, 425, 50], [1212, 440, 50], [1196, 485, 50], [1236, 482, 50], [1214, 560, 40],
  [1246, 530, 38], [1268, 525, 54], [1308, 565, 58], [1362, 610, 62], [1436, 658, 62], [1490, 718, 44], [1478, 775, 32],
  [1160, 600, 50], [1155, 680, 34], [1060, 628, 66], [952, 655, 36], [935, 705, 46], [1025, 765, 20],
]
const FRONT_POSTS = [[908, 850, 20], [1014, 880, 22], [1184, 798, 64], [1355, 798, 64], [1490, 900, 28], [1520, 885, 28]]

const DIAG_POSTS = [[57, 485], [75, 567], [100, 620], [125, 660], [155, 712], [187, 765], [215, 826], [243, 868], [267, 908], [290, 955]]
const NEAR_POSTS = [[165, 428, 1.1], [487, 337, 1.05], [767, 256, 1], [1016, 186, 0.95], [1237, 123, 0.9]]
const NEAR_BRACKETS = [[188, 598], [507, 495], [787, 405], [1034, 326], [1255, 258]]

function FloorGrid() {
  const rows = Array.from({ length: 62 }, (_, k) => {
    const yl = 630 + 1 / (0.0009 + 0.00028 * k)
    const yr = yl + (630 - yl) * (2503 / 11450)
    return <path key={k} d={`M50 ${yl.toFixed(1)} L2553 ${yr.toFixed(1)}`} strokeOpacity={k % 5 === 2 ? 0.4 : 0.22} />
  })
  const cols = Array.from({ length: 40 }, (_, k) => {
    const m = -0.22 + (k - 14) * 0.83
    return <path key={k} d={`M${(480 + m * 110).toFixed(1)} 700 L${(480 + m * 1300).toFixed(1)} 1890`} strokeOpacity={k % 5 === 4 ? 0.3 : 0.17} />
  })
  return <g stroke="#74757c" strokeWidth="2" fill="none" mask="url(#haze)">{rows}{cols}</g>
}

function NearRail({ y1, y2 }) {
  const [a0, a1] = [near([14, y1]), near([1520, y2])]
  const [b0, b1] = [near([14, y1 + 22]), near([1520, y2 + 16])]
  const [c0, c1] = [near([14, y1 + 84]), near([1520, y2 + 56])]
  const hatch = []
  for (let i = 0; i < 170; i++) {
    const t = i / 170
    const x = a0[0] + (a1[0] - a0[0]) * t
    const ya = a0[1] + (a1[1] - a0[1]) * t
    const yb = b0[1] + (b1[1] - b0[1]) * t
    hatch.push(`M${x.toFixed(1)} ${ya.toFixed(1)} L${(x + 6).toFixed(1)} ${yb.toFixed(1)}`)
  }
  return (
    <g fill="none" stroke="#232323">
      <path d={line([a0, a1, c1, c0]) + 'Z'} fill="#a4a4a4" stroke="none" />
      <path d={hatch.join(' ')} strokeWidth="1" />
      <path d={line([a0, a1])} strokeWidth="2.5" />
      <path d={line([b0, b1])} strokeWidth="2" />
      <path d={line([c1, a1])} strokeWidth="2" />
      <path d={line([c0, c1])} strokeWidth="4" />
    </g>
  )
}

function Scene() {
  return (
    <svg viewBox="50 291 2503 1598" preserveAspectRatio="xMidYMid slice" className="block size-full">
      <defs>
        <linearGradient id="sky" x1="0" y1="0" x2="0" y2="1">
          <stop offset="0" stopColor="#b3b3b3" />
          <stop offset="0.3" stopColor="#aaaaaa" />
          <stop offset="1" stopColor="#9a9a9a" />
        </linearGradient>
        <linearGradient id="fade" x1="0" y1="0" x2="0" y2="1">
          <stop offset="0.22" stopColor="#000" />
          <stop offset="0.34" stopColor="#777" />
          <stop offset="0.5" stopColor="#fff" />
        </linearGradient>
        <mask id="haze" maskUnits="userSpaceOnUse" x="50" y="291" width="2503" height="1598">
          <rect x="50" y="291" width="2503" height="1598" fill="url(#fade)" />
        </mask>
      </defs>
      <rect x="50" y="291" width="2503" height="1598" fill="url(#sky)" />
      <FloorGrid />
      <text x="400" y="1296" transform="rotate(-4 400 1296)" className="fill-[#8a8aa6] text-[104px] font-bold font-[DejaVu_Sans]">-25</text>
      <path d="M1690 918 l40 -4 l20 8 l-34 8 Z M1735 928 l50 -5 l30 6 l-50 8 Z" fill="#a08a8a" fillOpacity="0.5" />

      {/* far straight run, seen from behind */}
      <g stroke="#222" strokeWidth="2" fill="none">
        {STRAIGHT.map((l, i) => <path key={i} d={line(l.map(far))} />)}
        <path d={line([[760, 128], [760, 158]].map(far))} />
        <path d={line([[760, 178], [760, 208]].map(far))} />
      </g>
      {STRAIGHT_POSTS.map((u, i) => {
        const [x, y] = far([u, 122 + i * 16])
        return <Post key={u} x={x} y={y} h={i > 11 ? 16 : 26} w={10} spike={i < 12} />
      })}

      {/* short curved end */}
      <Rail top={shift(STUB, 76)} bottom={shift(STUB, 110)} steps={5} />
      <Rail top={STUB} bottom={shift(STUB, 34)} steps={5} />

      {/* middle arc */}
      {ARC_POSTS.map(([u, v]) => {
        const [x, y] = far([u, v])
        return <Post key={u} x={x} y={y} h={56} w={12} />
      })}
      <Rail top={shift(ARC, 80)} bottom={shift(ARC, 118)} steps={8} />
      <Rail top={ARC} bottom={shift(ARC, 38)} steps={8} />

      {/* far side of the loop */}
      <Rail top={shift(BACK_LEFT, 110)} bottom={shift(BACK_LEFT, 158)} steps={5} />
      <Rail top={BACK_LEFT} bottom={shift(BACK_LEFT, 54)} steps={5} />
      <Rail top={shift(BACK_RIGHT, 110)} bottom={shift(BACK_RIGHT, 152)} steps={5} />
      <Rail top={BACK_RIGHT} bottom={shift(BACK_RIGHT, 46)} steps={5} />
      {CLUSTER.map(([u, v, h]) => {
        const [x, y] = far([u, v])
        return <Post key={`${u}-${v}`} x={x} y={y} h={h - 8} w={15} flip={u < 1180} spike />
      })}

      {/* near side of the loop */}
      {FRONT_POSTS.map(([u, v, h]) => {
        const [x, y] = far([u, v])
        return <Post key={u} x={x} y={y} h={h} w={20} />
      })}
      <Rail top={LOOP2_TOP} bottom={LOOP2_BOTTOM} steps={5} />
      <Rail top={LOOP_TOP} bottom={LOOP_BOTTOM} steps={5} />

      {/* x axis */}
      <path d="M1726 901 L1834 930 M1896 948 L2553 1123" stroke="#cf5a54" strokeWidth="2" fill="none" />
      <text x="1722" y="902" className="fill-[#dd4a3f] text-[26px]">x</text>

      {/* diagonal run back from the corner */}
      <g stroke="#222" strokeWidth="2" fill="none">
        {[[[88, 560], [322, 992]], [[84, 570], [316, 1000]], [[84, 640], [270, 1020]], [[86, 650], [262, 1024]], [[84, 600], [302, 1006]], [[84, 690], [232, 1030]]].map((l, i) => (
          <path key={i} d={line(l.map(far))} />
        ))}
      </g>
      {DIAG_POSTS.map(([u, v]) => {
        const [x, y] = far([u, v])
        return (
          <g key={u}>
            <path d={`M${x - 14} ${y + 20} l8 4 v20 l-5 10 l-3 -7 Z`} fill="#9c9c9c" stroke="#222" strokeWidth="1.5" />
            <Post x={x} y={y} h={u > 260 ? 24 : 34} w={17} />
          </g>
        )
      })}

      {/* near run, leaving the view on the left */}
      {NEAR_BRACKETS.map(([u, v]) => {
        const [x, y] = near([u, v])
        return (
          <path key={u} d={`M${x} ${y} V${y + 24} L${x + 12} ${y + 30} V${y} M${x + 8} ${y} V${y + 28} M${x + 16} ${y} V${y + 26} H${x + 36} L${x + 43} ${y + 14} V${y - 4} M${x + 36} ${y + 26} V${y - 2} M${x + 16} ${y + 12} H${x + 40}`} fill="none" stroke="#222" strokeWidth="2" />
        )
      })}
      <path d="M1186 1040 v22 l22 4 v-26 M1196 1040 v24 M1212 1040 l24 20 M1220 1038 l22 22" fill="none" stroke="#222" strokeWidth="2" />
      <NearRail y1={735} y2={234} />
      <NearRail y1={580} y2={125} />
      {NEAR_POSTS.map(([u, v, k]) => {
        const [x, y] = near([u, v])
        return (
          <g key={u} transform={`translate(${x.toFixed(0)} ${y.toFixed(0)}) scale(${k})`} fill="#a4a4a4" stroke="#222" strokeWidth="2">
            <path d="M20 22 Q22 8 34 4 L46 5 Q52 10 52 34 L38 41 H24 Z" />
            <path d="M0 4 L14 0 L40 1 L46 6 L24 9 L20 26 L2 20 Z M0 4 L24 9 M24 9 L46 6 M28 40 L32 18 L38 12 L50 12" />
          </g>
        )
      })}

      {/* hand cursor */}
      <path d="M1361 1060 q8 -8 16 0 q3 8 -3 16 h-8 q-6 -8 -5 -16 Z" fill="#fff" stroke="#333" strokeWidth="1.5" />
      <g className="text-[24px]">
        <text x="68" y="1866" fill="#d23b25">x</text>
        <text x="72" y="1848" fill="#33b83a">y</text>
        <text x="88" y="1867" fill="#2b2fd0">z</text>
      </g>
      <path d="M70 1868 H90" stroke="#2b2fd0" strokeWidth="2" />
    </svg>
  )
}

/* ---------- network graph ---------- */

const M = 3188
const NODES = [
  { n: 'dissolve1', x: M, y: 363, c: '#e08a2a' },
  { n: 'resample1', x: 3034, y: 466, c: '#b8a8a8' },
  { n: 'polyframe2', x: M, y: 466, c: '#c8a040' },
  { n: 'transform1', x: 3034, y: 505, c: '#5b7fb5' },
  { n: 'transform4', x: M, y: 505, c: '#5b7fb5' },
  { n: 'polyframe1', x: 3034, y: 544, c: '#a8a040' },
  { n: 'object_merge2', x: 2803, y: 517, c: '#a05050', sub: '../barrier_posts_OUT', shape: 'trapDown' },
  { n: 'line1', x: 3111, y: 594, c: '#aaa' },
  { n: 'transform3', x: 3266, y: 594, c: '#5b7fb5' },
  { n: 'copytopoints1', x: 2957, y: 621, c: '#d88a20', fill: '#f5a01c', dual: true },
  { n: 'normal1', x: 2957, y: 659, c: '#e0963a' },
  { n: 'blast1', x: 2957, y: 698, c: '#dd6b30', sub: '192-299' },
  { n: 'uvunwrap1', x: 2957, y: 737, c: '#444', sub: 'uv', dual: true },
  { n: 'uvlayout1', x: 2957, y: 775, c: '#222', sub: 'uv', flag: true, dual: true },
  { n: 'reverse2', x: 2957, y: 814, c: '#c09070' },
  { n: 'normal3', x: 2957, y: 852, c: '#e0963a' },
  { n: 'blast2', x: 2957, y: 887, c: '#dd7b30', sub: '200-299' },
  { n: 'blast3', x: 2957, y: 921, c: '#dd7b30', sub: '150-245' },
  { n: 'sweep1', x: M, y: 706, c: '#999', dual: true },
  { n: 'skin1', x: M, y: 745, c: '#c8a8a0', dual: true },
  { n: 'carve1', x: M, y: 780, c: '#999' },
  { n: 'delete1', x: M, y: 818, c: '#d04040' },
  { n: 'convert1', x: M, y: 856, c: '#e08a2a', shape: 'trapUp' },
  { n: 'ends3', x: M, y: 895, c: '#aaa' },
  { n: 'dissolve2', x: M, y: 934, c: '#e08a2a' },
  { n: 'edit1', x: M, y: 968, c: '#777', dual: true },
  { n: 'convert2', x: M, y: 1007, c: '#e08a2a', shape: 'trapUp' },
  { n: 'join1', x: M, y: 1045, c: '#999' },
  { n: 'transform5', x: 3288, y: 1122, c: '#5b7fb5' },
  { n: 'merge4', x: M, y: 1199, c: '#666', shape: 'merge' },
  { n: 'skin2', x: M, y: 1238, c: '#c8a8a0', dual: true },
  { n: 'uvtexture1', x: M, y: 1277, c: '#444', sub: 'uv' },
  { n: 'convert3', x: M, y: 1315, c: '#e08a2a', shape: 'trapUp' },
  { n: 'uvedit1', x: M, y: 1354, c: '#222', sub: 'uv' },
  { n: 'uvtransform1', x: M, y: 1393, c: '#1d3557', sub: 'uv' },
  { n: 'normal2', x: M, y: 1432, c: '#e0963a' },
  { n: 'attribpromote1', x: M, y: 1470, c: '#c05040', sub: 'uv', shape: 'para' },
  { n: 'blast7', x: M, y: 1509, c: '#dd7b30', sub: '312-623' },
  { n: 'polyextrude3', x: M, y: 1547, c: '#e0a83a', dual: true },
  { n: 'delete3', x: M, y: 1589, c: '#d04040' },
  { n: 'polybevel1', x: M, y: 1624, c: '#c8b040', dual: true },
  { n: 'delete2', x: 3288, y: 1612, c: '#d04040' },
  { n: 'merge6', x: M, y: 1662, c: '#777', shape: 'merge' },
  { n: 'fuse1', x: M, y: 1703, c: '#b06060' },
  { n: 'uvunwrap2', x: 3194, y: 1727, c: '#555', sub: 'uv', dual: true },
  { n: 'groupdelete1', x: 3194, y: 1766, c: '#b8a840', sub: 'extrudeBack extrudeFront', sub2: 'curveEnds' },
  { n: 'side_rails', x: 3194, y: 1805, c: '#e8d8b0', sub: '`opname(".")`', dual: true },
  { n: 'uvquickshade1', x: 3411, y: 1618, c: '#444', sub: 'uv' },
  { n: 'groupdelete2', x: 2941, y: 1600, c: '#b8a840', sub: 'uv_cb' },
  { n: 'supports', x: 2948, y: 1645, c: '#e8d8b0', sub: '`opname(".")`', dual: true },
]

const INPUTS = [
  { id: 1, x: 3188, color: '#1558b8' },
  { id: 2, x: 3343, color: '#dd1a05' },
  { id: 3, x: 3497, color: '#dd1a05' },
  { id: 4, x: 3651, color: '#dd1a05' },
]

const SHAPES = {
  box: 'M-19 -7 H19 V7 H-19 Z',
  trapUp: 'M-15 -7 H15 L20 7 H-20 Z',
  trapDown: 'M-20 -7 H20 L16 7 H-16 Z',
  para: 'M-16 -6 H20 L16 6 H-20 Z',
  merge: 'M-14 -10 H14 L20 0 Q20 7 12 7 H-12 Q-20 7 -20 0 Z',
}

const WIRES = [
  'M3188 334 V459', 'M3188 378 Q3188 382 3180 386 L3044 444 Q3034 448 3034 459',
  'M3034 472 V538', 'M3188 472 V500',
  'M2803 526 Q2804 534 2812 540 L2940 602 Q2949 606 2949 614',
  'M3188 514 Q3188 520 3194 526 L3262 576 Q3266 580 3266 588',
  'M2957 628 V700', 'M2957 704 L2949 730', 'M2957 742 L2949 768', 'M2957 780 V930',
  'M2957 928 L2952 1180 Q2948 1380 2942 1594', 'M2941 1606 L2940 1638',
  'M3188 714 L3180 738', 'M3188 750 V930', 'M3188 940 L3180 962', 'M3188 974 V1050',
  'M3188 1052 L3182 1188', 'M3188 1054 Q3188 1062 3198 1066 L3276 1100 Q3288 1106 3288 1116',
  'M3288 1130 Q3288 1140 3274 1144 L3206 1178 Q3196 1182 3194 1190',
  'M3188 1208 L3180 1232', 'M3188 1244 V1500', 'M3188 1515 L3180 1540', 'M3188 1553 V1584',
  'M3188 1556 Q3188 1564 3200 1566 L3270 1590 Q3286 1594 3287 1606', 'M3188 1595 L3180 1618',
  'M3188 1630 L3184 1652', 'M3288 1618 Q3288 1630 3274 1632 L3210 1642 Q3196 1644 3194 1652',
  'M3188 1670 V1698', 'M3188 1708 L3186 1721', 'M3194 1733 V1760', 'M3194 1772 L3186 1798',
]

const DASHED = ['M3034 551 Q3034 560 3028 566 L2974 600 Q2965 606 2965 614', 'M3188 514 V698', 'M3111 602 L3178 698', 'M3266 602 L3199 698']

function Node({ n, x, y, c, sub, sub2, shape = 'box', fill = '#d2d2d2', flag, dual }) {
  return (
    <g transform={`translate(${x} ${y})`}>
      <path d={dual ? 'M-8 -12 V-7 M8 -12 V-7 M0 7 V12' : 'M0 -11 V-7 M0 7 V12'} stroke="#c4c4c4" strokeWidth="3" />
      <path d={SHAPES[shape]} fill={fill} stroke="#ededed" strokeWidth="1" strokeLinejoin="round" />
      <path d="M-12 -5 L-14 5 M-7 -5 L-9 5 M9 -5 V5 M14 -5 V5" stroke="#9a9a9a" strokeWidth="1.5" />
      {flag && <path d="M-15 -6 H-9 V6 H-15 Z" fill="#dc3d22" />}
      <circle r="4" fill={c} />
      <text x="23" y="2" className="fill-[#b9b9b9] text-[9px]">{n}</text>
      {sub && <text x="23" y="14" className="fill-[#5878ad] text-[8px]">{sub}</text>}
      {sub2 && <text x="23" y="24" className="fill-[#5878ad] text-[8px]">{sub2}</text>}
    </g>
  )
}

function Network() {
  const cols = Array.from({ length: 16 }, (_, i) => 2649 + i * 77.1)
  const rows = Array.from({ length: 42 }, (_, i) => 300 + i * 38.6)
  return (
    <svg viewBox="2611 279 1225 1610" preserveAspectRatio="xMidYMin slice" className="block size-full bg-[#2f2f2f]">
      <g stroke="#393939" strokeWidth="2">
        {cols.map(x => <path key={x} d={`M${x} 279 V1889`} />)}
        {rows.map(y => <path key={y} d={`M2611 ${y} H3836`} />)}
      </g>
      <text x="3573" y="360" className="fill-[#545454] text-[48px] font-bold">Geometry</text>
      <g fill="none" stroke="#4f6d9e" strokeWidth="2">
        {WIRES.map(d => <path key={d} d={d} />)}
        {DASHED.map(d => <path key={d} d={d} strokeDasharray="3 3" strokeWidth="1.5" stroke="#5f6a86" />)}
      </g>
      <circle cx="2953" cy="1843" r="56" fill="#4566a1" />
      <circle cx="2953" cy="1843" r="38" fill="#967bca" />
      <g fill="none" stroke="#7b7f58" strokeWidth="2">
        <path d="M2948 1652 V1830" />
        <path d="M3194 1812 Q3194 1823 3186 1823 L2968 1825 Q2962 1826 2960 1832" />
      </g>
      <rect x="2931" y="1835" width="44" height="17" rx="8" fill="#e6e6e6" stroke="#f0b51c" strokeWidth="3.5" />
      <path d="M2939 1839 V1848 M2944 1839 V1848 M2949 1839 L2957 1848 M2957 1839 L2949 1848" stroke="#555" strokeWidth="1.5" />
      <path d="M2964 1838 H2970 V1849 H2964 Z" fill="#2e8ad8" />
      <text x="2978" y="1845" className="fill-[#c4b9e0] text-[9px]">merge3</text>
      {INPUTS.map(i => (
        <g key={i.id} transform={`translate(${i.x} 325)`}>
          <path d="M-15 -8 H15 V3 L10 7 H-10 L-15 3 Z" fill={i.color} />
          <path d="M0 8 V12" stroke="#c4c4c4" strokeWidth="3" />
          <text y="3" textAnchor="middle" className="fill-[#e8e8e8] text-[9px]">{i.id}</text>
          <text x="21" y="1" className="fill-[#b9b9b9] text-[8px]">Sub-Network Input #{i.id}</text>
          {i.id === 1 && <text x="21" y="12" className="fill-[#b9b9b9] text-[8px]">rock1</text>}
        </g>
      ))}
      {NODES.map(n => <Node key={n.n} {...n} />)}
    </svg>
  )
}

/* ---------- panes ---------- */

function ViewBadge({ children }) {
  return (
    <button className="h-9 px-4 flex items-center gap-1.5 rounded-full bg-[#858585] text-[22px] leading-9 text-[#dcdcdc]">
      {children}
      <Caret className="size-1.5" fill="#dcdcdc" />
    </button>
  )
}

function ScenePane() {
  return (
    <section className="flex flex-col flex-1 min-w-0">
      <Tabs tabs={LEFT_TABS} />
      <PathBar>
        <div className="flex items-center w-[202px] shrink-0 pl-3">
          <Icon name="pin" className="size-6" />
          <Icon name="rings" className="size-7 ml-2.5" />
          <Icon name="ghost" className="size-8 ml-auto" />
          <Icon name="ball" className="size-8 ml-2" />
          <Icon name="square" className="size-7" />
        </div>
      </PathBar>
      <div className="h-[70px] flex items-stretch bg-[#2e2e2e] border-t-2 border-[#444] border-b-2 border-b-[#1c1c1c]">
        <Handle />
        <div className="flex flex-1 items-center pl-3 pr-1.5">
          <Icon name="gear" className="size-7" />
          <span className="text-[24px] leading-8 font-bold text-[#dedede]">View</span>
          <div className="flex flex-1 justify-center gap-7">
            {['tumble', 'track', 'dolly'].map(i => <button key={i} aria-label={i}><Icon name={i} className="size-7" /></button>)}
          </div>
          <Icon name="stack" className="size-7 mr-2" />
          <button aria-label="Help"><Icon name="help" className="size-7" /></button>
        </div>
      </div>
      <div className="flex flex-1 min-h-0">
        <LeftStrip />
        <div className="relative flex-1 min-w-0 overflow-hidden border-t-2 border-l border-[#c2c2c2]">
          <Scene />
          <div className="absolute top-3 right-3 flex gap-2.5">
            <button aria-label="Lock view" className="size-9 rounded-full bg-[#858585] flex items-center justify-center">
              <Icon name="lockBadge" className="size-6" />
            </button>
            <ViewBadge>Persp</ViewBadge>
            <ViewBadge>No cam</ViewBadge>
          </div>
          <p className="absolute bottom-3.5 inset-x-0 text-center text-[23px] leading-9 text-[#1f1f1f] whitespace-nowrap">
            Left mouse tumbles. Middle pans. Right dollies. Ctrl+Alt+Left box-zooms. Ctrl+Right zooms. Spacebar-Ctrl-Left tilts. Hold L for alternate tumble, dolly, and zoom.
          </p>
        </div>
        <DisplayStrip />
      </div>
    </section>
  )
}

function ToolbarIcons({ names }) {
  return (
    <div className="flex items-center gap-2.5">
      {names.map(i => <button key={i} aria-label={i}><Icon name={i} className="size-[26px]" /></button>)}
    </div>
  )
}

function NetworkPane() {
  return (
    <section className="flex flex-col w-[1229px] shrink-0 border-r-4 border-[#262626]">
      <Tabs tabs={RIGHT_TABS} />
      <PathBar>
        <div className="flex items-center w-[70px] shrink-0 pl-3 gap-2.5">
          <Icon name="pin" className="size-6" />
          <Icon name="rings" className="size-7" />
        </div>
      </PathBar>
      <div className="h-[58px] flex items-stretch bg-linear-to-b from-[#3c3c3c] to-[#323232] border-y-2 border-[#1c1c1c]">
        <Handle />
        <nav className="flex items-center">
          {['Add', 'Edit', 'Go', 'View', 'Tools', 'Layout', 'Help'].map(m => (
            <button key={m} className="px-[17px] text-[25px] leading-9 text-[#c2c2c2]">{m}</button>
          ))}
        </nav>
        <div className="ml-auto flex items-center gap-11 pr-0.5">
          <ToolbarIcons names={['tools', 'tree', 'list']} />
          <ToolbarIcons names={['palette', 'gridList']} />
          <ToolbarIcons names={['boxes', 'note', 'picture', 'box']} />
          <ToolbarIcons names={['search', 'eye']} />
        </div>
      </div>
      <div className="flex-1 min-h-0 overflow-hidden"><Network /></div>
    </section>
  )
}

function PlayButton({ icon, label, active }) {
  return (
    <button aria-label={label} className={`h-full w-[59px] flex items-center justify-center border border-[#222] ${active ? 'bg-linear-to-b from-[#8699a5] to-[#bcc6cb]' : 'bg-linear-to-b from-[#525252] to-[#404040]'}`}>
      <Icon name={icon} className="size-9" />
    </button>
  )
}

function Playbar() {
  const field = 'h-[46px] px-1.5 text-[24px] text-[#e8e8e8] font-[DejaVu_Sans_Mono] outline-none'
  return (
    <footer className="h-[156px] shrink-0 flex items-stretch bg-[#2f2f2f] border-y-2 border-[#454545]">
      <Handle up={false} />
      <div className="flex-1 min-w-0 flex flex-col pl-[7px] pt-[5px] pr-2">
        <div className="flex h-[90px]">
          <div className="flex h-[60px] mt-4 gap-px">
            <PlayButton icon="first" label="First frame" />
            <PlayButton icon="playBack" label="Play backward" />
            <PlayButton icon="stop" label="Stop" active />
            <PlayButton icon="play" label="Play" />
            <PlayButton icon="last" label="Last frame" />
            <input aria-label="Current frame" defaultValue="1" className="w-[104px] mx-0.5 px-1 bg-[#131313] text-[24px] text-[#e8e8e8] font-[DejaVu_Sans_Mono] outline-none" />
            <button aria-label="Previous frame" className="w-7 flex items-center justify-center bg-[#464646]"><Icon name="stepBack" className="size-5" /></button>
            <button aria-label="Next frame" className="w-7 flex items-center justify-center bg-[#464646]"><Icon name="stepNext" className="size-5" /></button>
          </div>
          <div className="relative flex-1 ml-2.5">
            <div className="h-[30px] w-[52px] border-2 border-[#9a9a9a] bg-black flex items-center justify-center text-[22px] leading-6 text-[#ececec]">1</div>
            <div className="mt-3 h-1 bg-[#6c6c6c]" />
            <span className="absolute top-7 left-0 h-6 w-0.5 bg-[#8a8a8a]" />
            <span className="absolute top-8 left-1/3 h-6 w-0.5 bg-[#6c6c6c]" />
            <span className="absolute top-8 left-2/3 h-6 w-0.5 bg-[#6c6c6c]" />
            <span className="absolute -top-2.5 left-1/3 text-[22px] leading-9 text-[#7c7c7c]">2</span>
            <span className="absolute -top-2.5 left-2/3 text-[22px] leading-9 text-[#7c7c7c]">3</span>
          </div>
        </div>
        <div className="flex items-center h-[52px]">
          <div className="flex h-[50px] gap-px">
            <PlayButton icon="flipbook" label="Flipbook" />
            <PlayButton icon="audio" label="Audio" />
            <PlayButton icon="loop" label="Loop mode" />
            <PlayButton icon="clock" label="Real time" active />
          </div>
          <div className="flex h-[50px] ml-1 opacity-60">
            <button aria-label="Previous key" className="w-[50px] flex items-center justify-center bg-[#363636]">
              <svg viewBox="0 0 24 24" className="size-6"><path d="M1 3 H4 V21 H1 Z" fill="#6b8040" /><path d="M20 4 V20 L8 12 Z" fill="#8c8c8c" /></svg>
            </button>
            <button aria-label="Next key" className="w-[50px] flex items-center justify-center bg-[#363636]">
              <svg viewBox="0 0 24 24" className="size-6"><path d="M4 4 V20 L16 12 Z" fill="#8c8c8c" /><path d="M20 3 H23 V21 H20 Z" fill="#6b8040" /></svg>
            </button>
          </div>
          <input aria-label="Global start" defaultValue="1" className={`${field} w-[92px] ml-[133px] bg-[#262626]`} />
          <input aria-label="Range start" defaultValue="1" className={`${field} w-[92px] ml-1 bg-[#131313]`} />
          <input
            type="range" aria-label="Playback range" min="1" max="900" defaultValue="1"
            className="flex-1 min-w-0 h-6 appearance-none bg-transparent [&::-webkit-slider-runnable-track]:h-1.5 [&::-webkit-slider-runnable-track]:bg-[#141414] [&::-webkit-slider-thumb]:appearance-none [&::-webkit-slider-thumb]:h-5 [&::-webkit-slider-thumb]:w-3.5 [&::-webkit-slider-thumb]:-mt-[7px] [&::-webkit-slider-thumb]:rounded-full [&::-webkit-slider-thumb]:bg-[#b5b5b5]"
          />
          <input aria-label="Range end" defaultValue="3" className={`${field} w-[90px] bg-[#131313]`} />
          <input aria-label="Global end" defaultValue="900" className={`${field} w-[90px] ml-1.5 bg-[#262626]`} />
        </div>
      </div>
      <div className="flex items-center shrink-0 pr-2.5">
        <button aria-label="Set key" className="size-[84px] rounded-full bg-[#343434] border border-[#2a2a2a] flex items-center justify-center"><Icon name="keyGlyph" className="size-9" /></button>
        <button aria-label="Key options" className="w-9 h-11 mr-2.5 bg-[#353535] flex items-center justify-center">
          <Caret fill="#9a9a9a" />
        </button>
        <div className="flex flex-col gap-2">
          <button aria-label="Scoped channels" className="size-12 bg-[#454545] flex items-center justify-center"><Icon name="refresh" className="size-10" /></button>
          <button aria-label="Channel curves" className="size-12 bg-[#454545] flex items-center justify-center"><Icon name="curves" className="size-10" /></button>
        </div>
        <div className="flex flex-col gap-2 ml-2 w-[332px]">
          <button className="h-12 flex items-center justify-between pl-8 pr-3 bg-linear-to-b from-[#4b4b4b] to-[#3f3f3f] text-[23px] leading-9 text-[#cdcdcd]">
            0 keys, 0/0 channels
            <svg viewBox="0 0 12 12" className="size-3"><path d="M6 0 L12 11 H0 Z" fill="#8d8d8d" /></svg>
          </button>
          <Combo label="Key mode" options={['Key All Channels']} className="h-12" textClass="text-[23px] pl-4" />
        </div>
      </div>
    </footer>
  )
}

export default function App() {
  return (
    <div className="h-screen min-w-[2800px] flex flex-col pt-12 pb-[66px] bg-[#303030] font-['Noto_Sans_CJK_SC',sans-serif] text-[#d6d6d6] overflow-hidden">
      <header className="h-[54px] shrink-0 flex items-stretch bg-linear-to-b from-[#3a3a3a] to-[#323232] border-b-2 border-[#1a1a1a]">
        <Handle />
        <nav className="flex items-center w-[711px]">
          {['File', 'Edit', 'Render', 'Assets', 'Windows', 'Redshift', 'Help'].map(m => (
            <button key={m} className="px-[11px] text-[25px] leading-9 text-[#d6d6d6]">{m}</button>
          ))}
        </nav>
        <Combo icon="layout" iconClass="size-9" label="Desktop" options={['Build']} className="w-[279px] mr-[21px]" />
        <Combo icon="target" iconClass="size-9" label="Radial menu" options={['Poly Modeling']} className="w-[279px]" />
        <Combo icon="clapper" iconClass="size-10" label="Shelf set" options={['Main']} className="w-[374px] ml-auto" />
        <button aria-label="Help" className="px-3.5"><Icon name="help" className="size-7" /></button>
      </header>
      <div className="h-[20px] shrink-0 pl-2 flex items-center bg-linear-to-b from-[#4f4f4f] to-[#3e3e3e]">
        <Caret fill="#0d0d0d" />
      </div>
      <main className="flex flex-1 min-h-0">
        <ScenePane />
        <div className="w-[18px] shrink-0 flex flex-col items-center justify-center gap-10 bg-[#474747] border-x-2 border-[#1c1c1c]">
          <svg viewBox="0 0 8 8" className="size-2"><path d="M8 0 V8 L0 4 Z" fill="#8a8a8a" /></svg>
          <span className="h-11 border-l-4 border-dotted border-[#666]" />
          <svg viewBox="0 0 8 8" className="size-2"><path d="M0 0 V8 L8 4 Z" fill="#8a8a8a" /></svg>
        </div>
        <NetworkPane />
      </main>
      <Playbar />
      <div className="h-[49px] shrink-0 flex items-stretch bg-[#1a1a1a]">
        <div className="ml-auto flex items-center gap-3.5 px-1 w-[82px] bg-[#363636]">
          <Icon name="brain" className="size-8" />
          <Icon name="sync" className="size-7" />
        </div>
        <Combo label="Update mode" options={['Auto Update']} className="w-[218px]" textClass="text-[24px] pl-5" />
      </div>
    </div>
  )
}
